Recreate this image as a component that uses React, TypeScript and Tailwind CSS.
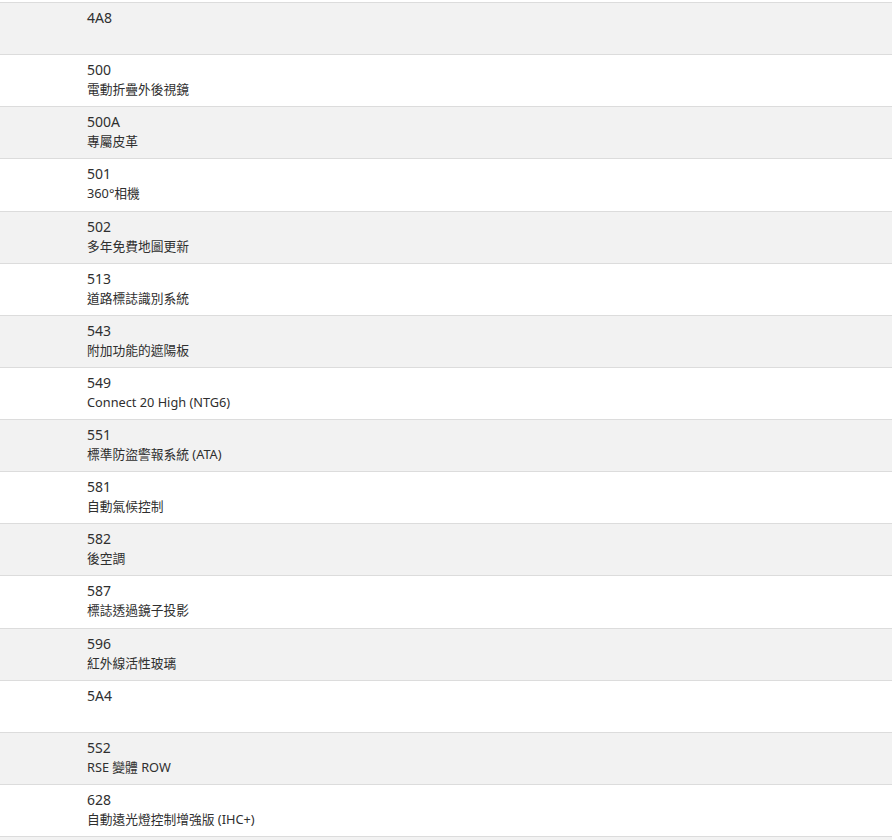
const items: { code: string; name: string }[] = [
  { code: "4A8", name: "" },
  { code: "500", name: "電動折疊外後視鏡" },
  { code: "500A", name: "專屬皮革" },
  { code: "501", name: "360°相機" },
  { code: "502", name: "多年免費地圖更新" },
  { code: "513", name: "道路標誌識別系統" },
  { code: "543", name: "附加功能的遮陽板" },
  { code: "549", name: "Connect 20 High (NTG6)" },
  { code: "551", name: "標準防盜警報系統 (ATA)" },
  { code: "581", name: "自動氣候控制" },
  { code: "582", name: "後空調" },
  { code: "587", name: "標誌透過鏡子投影" },
  { code: "596", name: "紅外線活性玻璃" },
  { code: "5A4", name: "" },
  { code: "5S2", name: "RSE 變體 ROW" },
  { code: "628", name: "自動遠光燈控制增強版 (IHC+)" },
];

export default function App() {
  return (
    <div
      className="w-[893px] h-[840px] overflow-hidden bg-white text-[#2f2f2f]"
      style={{ fontFamily: '"Noto Sans", "Noto Sans CJK TC", sans-serif' }}
    >
      <div className="mt-[2px] w-[892px]">
        {items.map((item, i) => (
          <div
            key={item.code}
            className={`h-[52.125px] border-t border-[#dcdcdc] pl-[87px] pt-[5px] ${
              i % 2 === 0 ? "bg-[#f2f2f2]" : "bg-white"
            }`}
          >
            <div className="text-[14px] leading-[20px]">{item.code}</div>
            {item.name && <div className="text-[12.75px] leading-[19px]">{item.name}</div>}
          </div>
        ))}
        {/* next row, only its top edge is in view */}
        <div className="h-[20px] border-t border-[#dcdcdc] bg-[#f2f2f2]" />
      </div>
    </div>
  );
}
